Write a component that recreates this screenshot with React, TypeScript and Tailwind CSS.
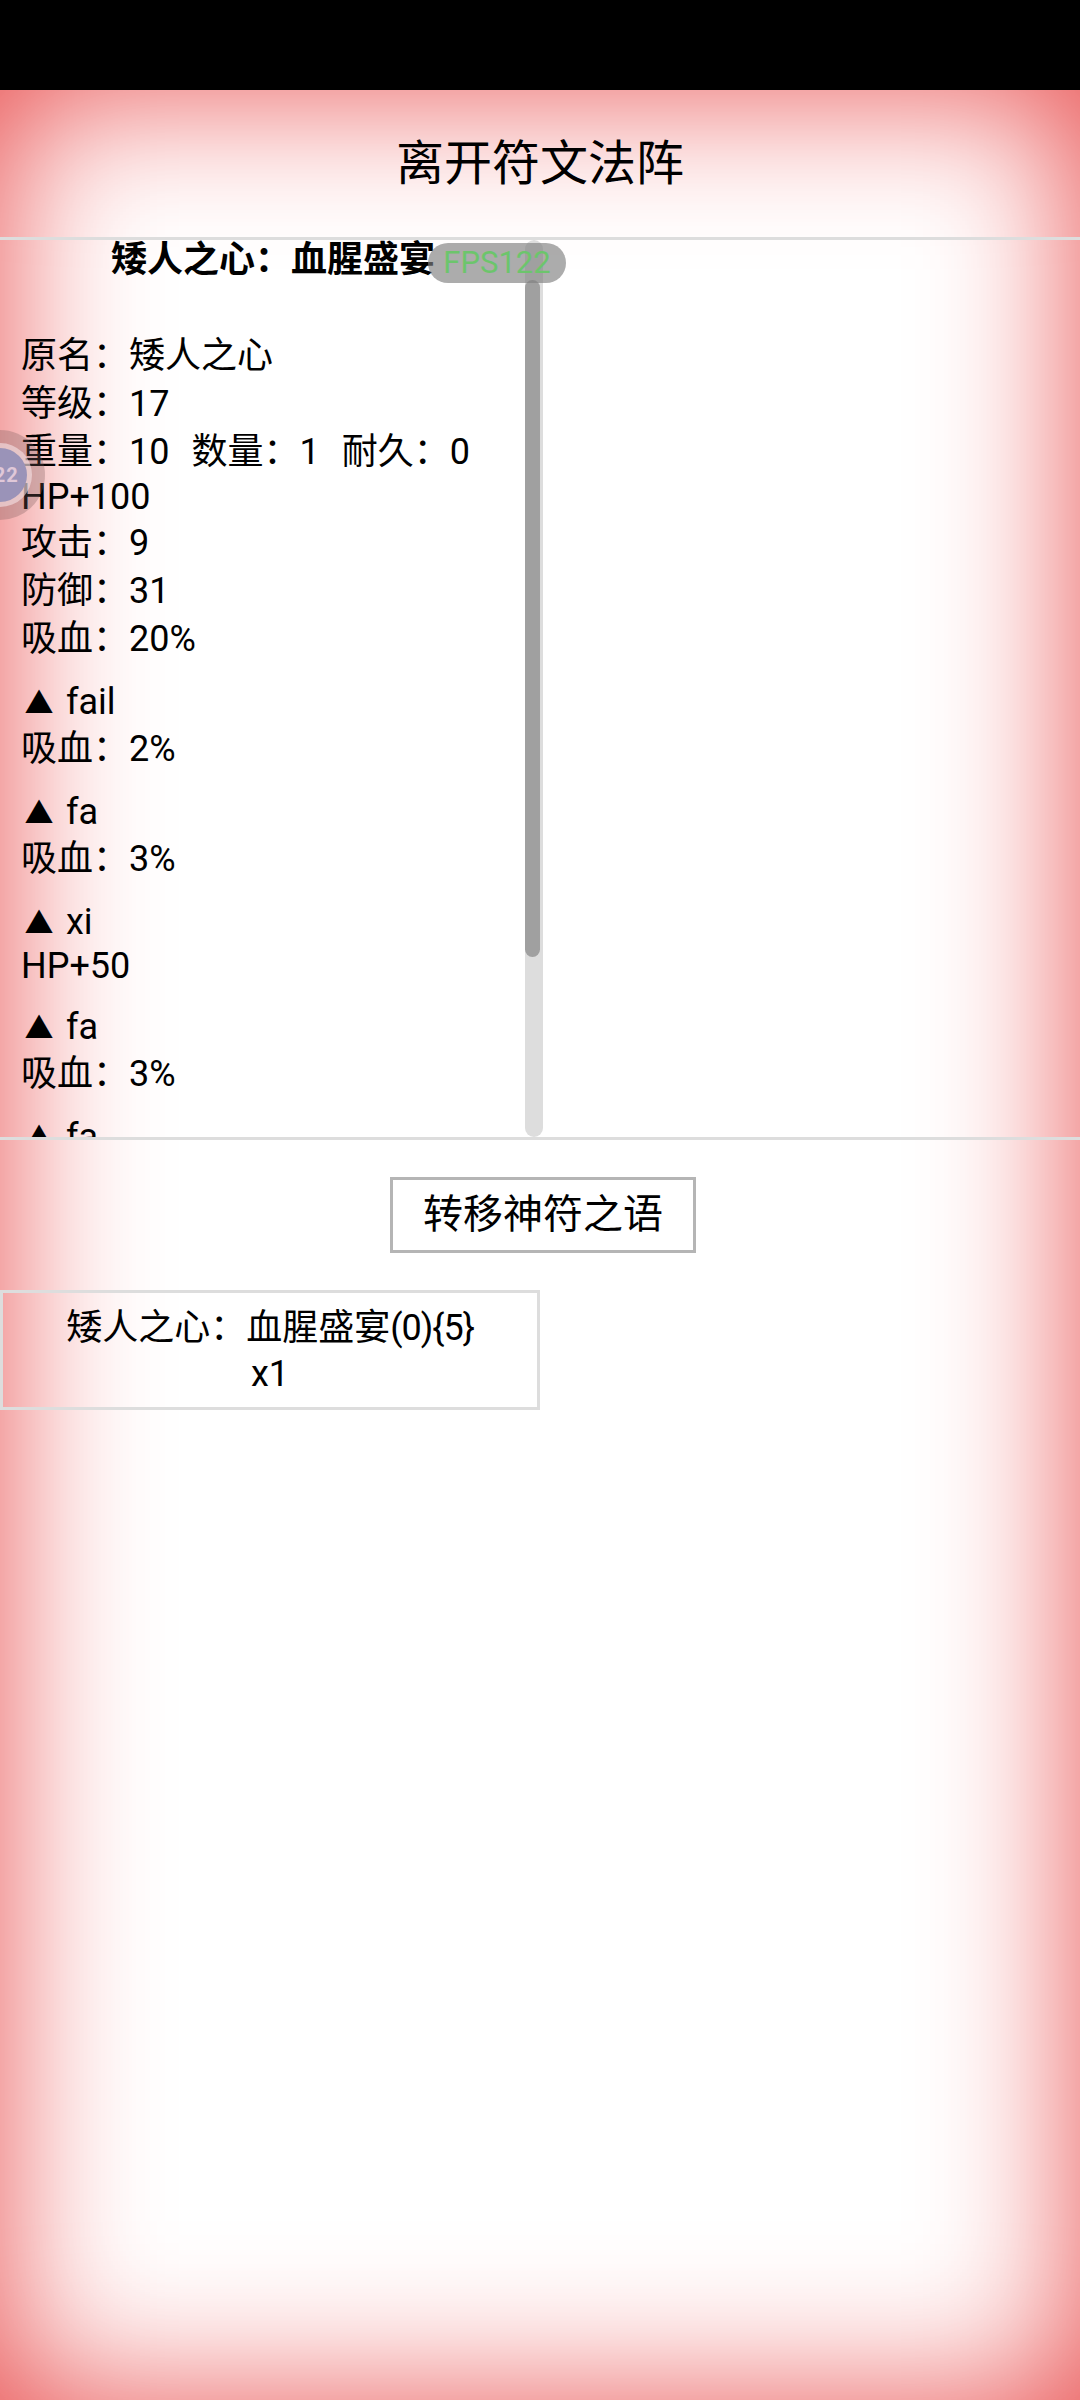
import React from 'react';

interface Group {
  title: string;
  lines: { text: string; short?: boolean }[];
}

const stats = ['攻击：9', '防御：31', '吸血：20%'];

const runes: Group[] = [
  { title: 'fail', lines: [{ text: '吸血：2%' }] },
  { title: 'fa', lines: [{ text: '吸血：3%' }] },
  { title: 'xi', lines: [{ text: 'HP+50', short: true }] },
  { title: 'fa', lines: [{ text: '吸血：3%' }] },
  { title: 'fa', lines: [{ text: '吸血：3%' }] },
];

const App = () => {
  return (
    <div className="relative w-[1080px] h-[2400px] overflow-hidden flex flex-col bg-white text-black font-['Roboto','Noto_Sans_CJK_SC',sans-serif]">
      <div className="h-[90px] shrink-0 bg-black"></div>

      <div className="flex-1 flex flex-col shadow-[inset_0_0_150px_#e84a4a]">
        <div className="h-[147px] flex items-center justify-center text-[48px] leading-[56px]">
          离开符文法阵
        </div>
        <div className="h-[3px] bg-[#dddddd]"></div>

        {/* scroll panel */}
        <div className="h-[897px] flex overflow-hidden">
          <div className="w-[525px] overflow-hidden text-[36px]">
            <div className="ml-[111px] w-[400px] h-[40px] font-bold leading-[40px]">矮人之心：血腥盛宴</div>
            <div className="mt-[52px] pl-[21px]">
              <div className="leading-[48px]">原名：矮人之心</div>
              <div className="leading-[48px]">等级：17</div>
              <div className="flex gap-[22px] leading-[48px]">
                <span>重量：10</span>
                <span>数量：1</span>
                <span>耐久：0</span>
              </div>
              <div className="leading-[43px]">HP+100</div>
              {stats.map((s) => (
                <div key={s} className="leading-[48px]">{s}</div>
              ))}
              {runes.map((r, i) => (
                <div key={i} className="mt-[16px]">
                  <div className="h-[46px] leading-[46px]">
                    <span className="inline-block w-[36px] text-center text-[29px] leading-none">▲</span> {r.title}
                  </div>
                  {r.lines.map((l) => (
                    <div key={l.text} className={l.short ? 'leading-[43px]' : 'leading-[48px]'}>{l.text}</div>
                  ))}
                </div>
              ))}
            </div>
          </div>
          <div className="w-[18px] h-full rounded-full bg-[#dddddd] overflow-hidden pt-[40px]">
            <div className="w-[15px] h-[677px] rounded-full bg-[#a0a0a0]"></div>
          </div>
        </div>
        <div className="h-[3px] bg-[#dddddd]"></div>

        <button className="mt-[37px] ml-[390px] w-[306px] h-[76px] border-[3px] border-[#b5b5b5] text-[40px] leading-[46px]">
          转移神符之语
        </button>

        <div className="mt-[37px] w-[540px] h-[120px] border-[3px] border-[#dddddd] px-[50px] pt-[2px] flex items-center justify-center text-center text-[36px] leading-[46px]">
          <div>
            矮人之心：血腥盛宴<span className="tracking-[-1px]">(0){'{5}'}</span> x1
          </div>
        </div>
      </div>

      {/* fps pill */}
      <div className="absolute left-[428px] top-[243px] w-[138px] h-[40px] rounded-full bg-[#808080]/65 flex items-center justify-center text-[31px] leading-[40px] text-[#6cc56c]">
        FPS122
      </div>

      {/* floating ball */}
      <div className="absolute left-[-45px] top-[430px] w-[90px] h-[90px] rounded-full bg-[#785a5a]/30 flex items-center justify-center">
        <div className="w-[64px] h-[64px] rounded-full bg-[#f5e3e6]/60 flex items-center justify-center">
          <div className="w-[54px] h-[54px] rounded-full bg-[#9a93b8] flex items-center justify-center text-[20px] font-bold tracking-[1px] text-[#e0c8d8]">
            122
          </div>
        </div>
      </div>
    </div>
  );
};

export default App;
